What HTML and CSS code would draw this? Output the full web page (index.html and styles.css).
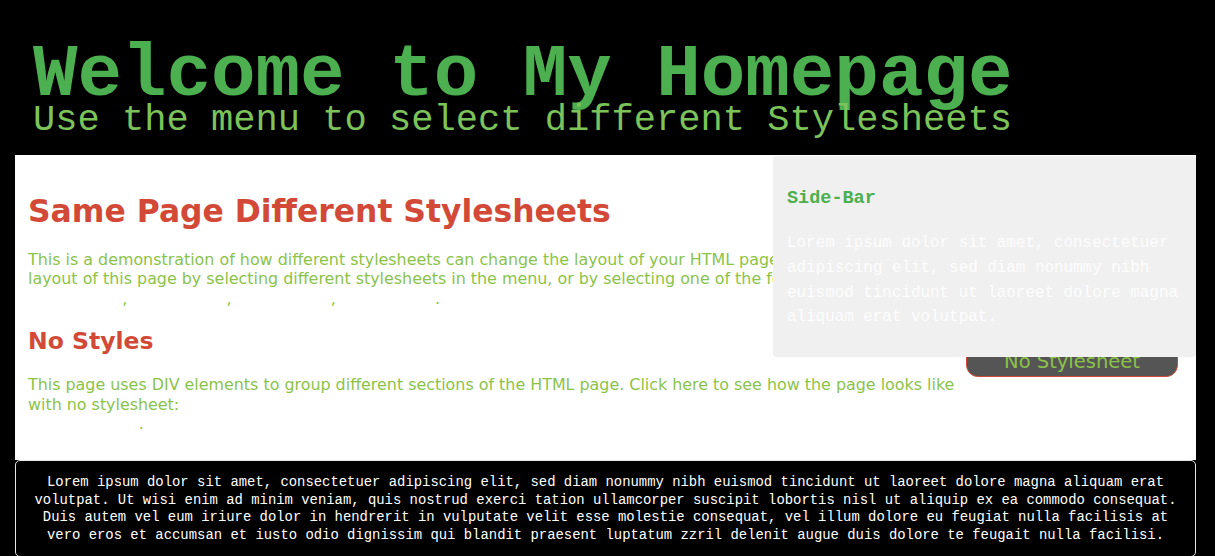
FILE: index.html
```html
<!DOCTYPE html>
<html lang="en">
<head>
<meta charset="utf-8">
<title>Welcome to My Homepage</title>
<link rel="stylesheet" href="styles.css">
</head>
<body>
<div class="page">
  <header class="masthead">
    <h1 class="site-title">Welcome to My Homepage</h1>
    <p class="site-tagline">Use the menu to select different Stylesheets</p>
  </header>

  <div class="content">
    <main class="main">
      <h2 class="page-title">Same Page Different Stylesheets</h2>
      <p class="text">This is a demonstration of how different stylesheets can change the layout of your HTML page. You can change the layout of this page by selecting different stylesheets in the menu, or by selecting one of the following links:
        <a class="link" href="#">Stylesheet1</a>, <a class="link" href="#">Stylesheet2</a>, <a class="link" href="#">Stylesheet3</a>, <a class="link" href="#">Stylesheet4</a>.</p>
      <h3 class="section-title">No Styles</h3>
      <p class="text">This page uses DIV elements to group different sections of the HTML page. Click here to see how the page looks like with no stylesheet:<br>
        <a class="link" href="#">No Stylesheet</a>.</p>
    </main>

    <nav class="menu">
      <a class="menu-btn" href="#">No Stylesheet</a>
    </nav>

    <aside class="sidebar">
      <h3 class="sidebar-title">Side-Bar</h3>
      <p class="sidebar-text">Lorem ipsum dolor sit amet, consectetuer adipiscing elit, sed diam nonummy nibh euismod tincidunt ut laoreet dolore magna aliquam erat volutpat.</p>
    </aside>
  </div>

  <footer class="footer">
    <p class="footer-text">Lorem ipsum dolor sit amet, consectetuer adipiscing elit, sed diam nonummy nibh euismod tincidunt ut laoreet dolore magna aliquam erat volutpat. Ut wisi enim ad minim veniam, quis nostrud exerci tation ullamcorper suscipit lobortis nisl ut aliquip ex ea commodo consequat. Duis autem vel eum iriure dolor in hendrerit in vulputate velit esse molestie consequat, vel illum dolore eu feugiat nulla facilisis at vero eros et accumsan et iusto odio dignissim qui blandit praesent luptatum zzril delenit augue duis dolore te feugait nulla facilisi.</p>
  </footer>
</div>
</body>
</html>
```

FILE: styles.css
```css
html, body {
  margin: 0;
  padding: 0;
  background: #000;
}

body {
  font-family: Verdana, "DejaVu Sans", sans-serif;
}

.page {
  margin: 0 19px 0 15px;
}

/* Header */
.masthead {
  padding: 44px 0 20px 18px;
  font-family: "Courier New", "Liberation Mono", monospace;
}

.site-title {
  margin: 0;
  font-size: 74.2px;
  line-height: 62px;
  font-weight: bold;
  color: #4caf50;
  white-space: nowrap;
}

.site-tagline {
  margin: 0;
  font-size: 37.1px;
  line-height: 29px;
  color: #7cc35a;
  white-space: nowrap;
}

/* Content */
.content {
  position: relative;
  display: flex;
  background: #fff;
  height: 305px;
  box-sizing: border-box;
}

.main {
  flex: 1;
  padding: 35.6px 0 0 13px;
  min-width: 0;
}

.page-title {
  margin: 0 0 19px;
  font-size: 31.4px;
  line-height: 40px;
  font-weight: bold;
  color: #d24a37;
}

.text {
  margin: 0;
  font-size: 15.9px;
  line-height: 19.5px;
  color: #8bc34a;
}

.link {
  color: #fff;
  text-decoration: none;
}

.section-title {
  margin: 18.3px 0 19px;
  font-size: 23.5px;
  line-height: 30px;
  font-weight: bold;
  color: #d24a37;
}

/* Menu */
.menu {
  width: 212px;
  margin-right: 18px;
  display: flex;
  flex-direction: column;
  justify-content: flex-end;
  height: 222px;
}

.menu-btn {
  display: block;
  box-sizing: border-box;
  height: 33px;
  padding: 5px 0 2px;
  line-height: 24px;
  font-size: 19.5px;
  text-align: center;
  text-decoration: none;
  color: #8bc34a;
  background: #555;
  border: 1px solid #d24a37;
  border-radius: 12px;
}

/* Sidebar (overlays the content) */
.sidebar {
  position: absolute;
  top: 1px;
  right: 0;
  width: 423px;
  height: 201px;
  box-sizing: border-box;
  padding: 32.4px 14px 0;
  background: #f0f0f0;
  border-radius: 4px;
  font-family: "Courier New", "Liberation Mono", monospace;
}

.sidebar-title {
  margin: 0 0 21px;
  font-size: 18.5px;
  line-height: 22px;
  font-weight: bold;
  color: #4caf50;
}

.sidebar-text {
  margin: 0;
  font-size: 15.9px;
  line-height: 24.6px;
  color: #fdfdfd;
}

/* Footer */
.footer {
  box-sizing: border-box;
  background: #000;
  border: 1px solid #e6e6e6;
  border-radius: 5px;
  padding: 13px 10px 12px;
}

.footer-text {
  margin: 0;
  font-family: "Courier New", "Liberation Mono", monospace;
  font-size: 13.9px;
  line-height: 17.5px;
  color: #fff;
  text-align: center;
}
```
